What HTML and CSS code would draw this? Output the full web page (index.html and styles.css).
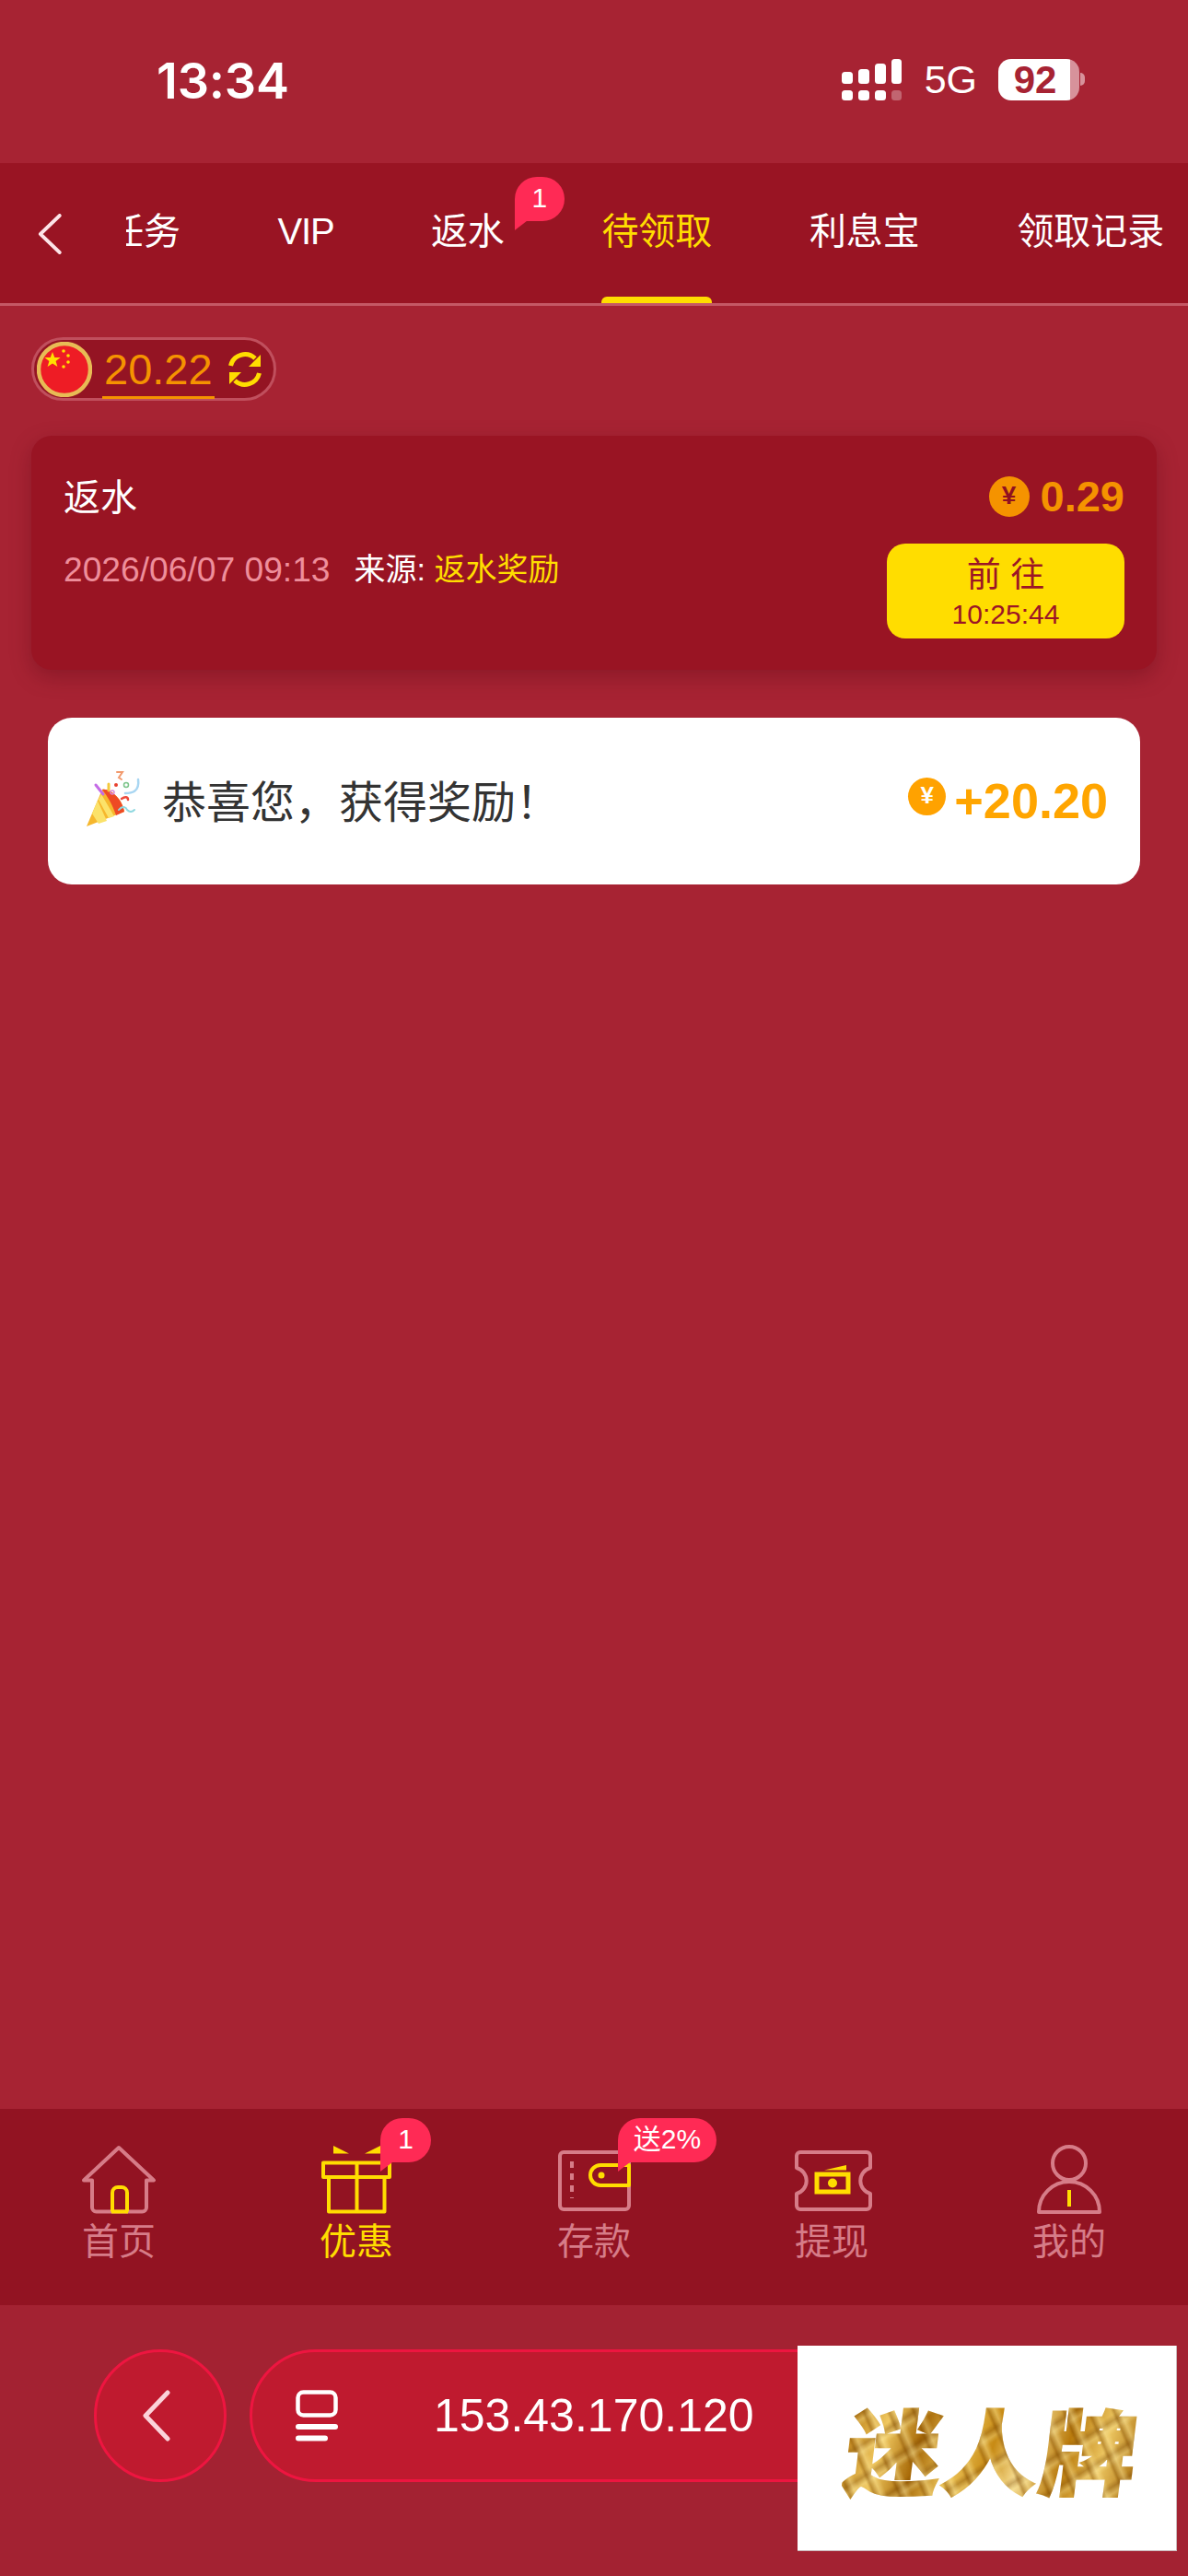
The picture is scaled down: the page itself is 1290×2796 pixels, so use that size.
FILE: index.html
```html
<!DOCTYPE html>
<html lang="zh-CN">
<head>
<meta charset="utf-8">
<title>待领取</title>
<link rel="stylesheet" href="styles.css">
</head>
<body>
<div class="page">
  <header class="status">
    <span class="time">13:34</span>
    <div class="status-right">
      <svg class="signal" width="66" height="46" viewBox="0 0 66 46" fill="#fff">
        <rect x="0" y="14" width="12" height="13" rx="3.5"/><rect x="18" y="11" width="12" height="16" rx="3.5"/><rect x="36" y="5" width="12" height="22" rx="3.5"/><rect x="54" y="0" width="11" height="27" rx="3.5"/>
        <rect x="0" y="34" width="12" height="11" rx="3.5"/><rect x="18" y="34" width="12" height="11" rx="3.5"/><rect x="36" y="34" width="12" height="11" rx="3.5"/><rect x="54" y="34" width="11" height="11" rx="3.5" opacity=".3"/>
      </svg>
      <span class="net">5G</span>
      <div class="battery"><span class="battery-num">92</span></div>
    </div>
  </header>

  <nav class="tabs-bar">
    <div class="tabs-back">
      <svg width="28" height="44" viewBox="0 0 28 44" fill="none" stroke="#fde4e8" stroke-width="4" stroke-linecap="round" stroke-linejoin="round"><path d="M25 2 3 22l22 20" transform="matrix(.95 0 0 1 1 0)"/></svg>
    </div>
    <div class="tabs-scroll">
      <div class="tabs">
        <a class="tab">任务</a>
        <a class="tab tab-vip">VIP</a>
        <a class="tab">返水<span class="badge badge-tab">1</span></a>
        <a class="tab tab-on">待领取</a>
        <a class="tab">利息宝</a>
        <a class="tab">领取记录</a>
      </div>
    </div>
  </nav>

  <main class="main">
    <div class="balance">
      <svg class="flag" width="60" height="60" viewBox="0 0 60 60">
        <circle cx="30" cy="30" r="28" fill="#ee1c25" stroke="#e8bb55" stroke-width="4.5"/>
        <polygon fill="#ffe000" points="17,11 19.3,17 25.6,17 20.6,20.9 22.4,27 17,23.4 11.6,27 13.4,20.9 8.4,17 14.7,17"/>
        <circle cx="29" cy="10" r="1.8" fill="#ffe000"/><circle cx="34" cy="15" r="1.8" fill="#ffe000"/><circle cx="34" cy="22" r="1.8" fill="#ffe000"/><circle cx="29" cy="27" r="1.8" fill="#ffe000"/>
      </svg>
      <span class="balance-num">20.22</span>
      <svg class="refresh" width="38" height="38" viewBox="0 0 38 38" fill="none" stroke="#ffdd00" stroke-width="5">
        <path d="M3.5 15A16 16 0 0 1 30 7"/><path d="M34.500 23A16 16 0 0 1 8 31"/>
        <polygon points="36,3 36,16 23,16" fill="#ffdd00" stroke="none"/><polygon points="2,35 2,22 15,22" fill="#ffdd00" stroke="none"/>
      </svg>
    </div>

    <section class="card">
      <div class="card-left">
        <h2 class="card-title">返水</h2>
        <p class="card-meta"><span class="card-date">2026/06/07 09:13</span><span class="card-src">来源: <em class="card-src-val">返水奖励</em></span></p>
      </div>
      <div class="card-right">
        <div class="amount"><span class="coin coin-card">¥</span><span class="amount-num">0.29</span></div>
        <button class="go"><span class="go-label">前 往</span><span class="go-time">10:25:44</span></button>
      </div>
    </section>

    <div class="toast">
      <div class="toast-left">
        <svg class="popper" width="62" height="66" viewBox="0 0 62 66">
          <path d="M2 62 19 22c8-2 22 10 24 24Z" fill="#f6b72d"/>
          <path d="M8 48 14 34l10 22-9 3ZM18 27l14 24-6 2-11-20Z" fill="#fbe26a"/>
          <path d="M19 22c8-2 22 10 24 24l-9 4C30 38 25 30 19 22Z" fill="#ee4a24"/>
          <g fill="none" stroke-width="2" stroke-linecap="round">
            <path d="M12 17l8 10" stroke="#c46be6" stroke-width="3"/>
            <path d="M26 16v7" stroke="#f4c93c" stroke-width="3"/>
            <path d="M35 3h6l-4 6 3 2" stroke="#f29a6d"/>
            <path d="M58 11c2 14-8 15-14 15" stroke="#a8d6f2" stroke-width="2.500"/>
            <path d="M40 32c4-3 7-2 7 1" stroke="#ec4a3c" stroke-width="2.500"/>
            <path d="M37 44c4-5 8-3 9 0 3 3 6 2 8 0" stroke="#8fd8e0"/>
          </g>
          <circle cx="34" cy="17" r="2" fill="#e8402e"/><circle cx="45" cy="17" r="2.500" fill="none" stroke="#7cc48a" stroke-width="1.500"/><circle cx="30" cy="25" r="2" fill="none" stroke="#dc8ad8" stroke-width="1.500"/>
        </svg>
        <span class="toast-text">恭喜您，获得奖励！</span>
      </div>
      <div class="toast-right"><span class="coin coin-toast">¥</span><span class="toast-num">+20.20</span></div>
    </div>
  </main>

  <footer class="bottom-nav">
    <a class="nav-item">
      <svg class="nav-icon" width="90" height="78" viewBox="0 0 90 78" fill="none" stroke="#d67c88" stroke-width="4" stroke-linejoin="round" stroke-linecap="round">
        <path d="M16 38.500H7L45 3l38 35.500H75V68a4.500 4.500 0 0 1-4.500 4.500h-50A4.500 4.500 0 0 1 16 68Z"/>
        <path d="M38 72.500V52a6 6 0 0 1 6-6h4a6 6 0 0 1 6 6v20.500M37 72.500h18" stroke="#ffdd00" stroke-linecap="butt"/>
      </svg>
      <span class="nav-label">首页</span>
    </a>
    <a class="nav-item nav-on">
      <svg class="nav-icon" width="90" height="78" viewBox="0 0 90 78" fill="none" stroke="#ffdd00" stroke-width="4" stroke-linejoin="round">
        <path d="M9 19.500h72V35H9ZM15 35v37.500h60.500V35M45.500 19.500v53"/>
        <path d="M20 1 37 9.500H20ZM71 1v8.500H54Z" fill="#ffdd00" stroke="none"/>
      </svg>
      <span class="nav-label">优惠</span>
      <span class="badge badge-gift">1</span>
    </a>
    <a class="nav-item">
      <svg class="nav-icon" width="90" height="78" viewBox="0 0 90 78" fill="none" stroke="#d67c88" stroke-width="4" stroke-linejoin="round">
        <rect x="8" y="8" width="75" height="62" rx="4"/>
        <path d="M21 18v40" stroke-dasharray="7 6"/>
        <path d="M83 22H52a11 11 0 0 0 0 22h31Z" stroke="#ffdd00"/>
        <circle cx="53" cy="33" r="3.500" fill="#ffdd00" stroke="none"/>
      </svg>
      <span class="nav-label">存款</span>
      <span class="badge badge-send">送2%</span>
    </a>
    <a class="nav-item">
      <svg class="nav-icon" width="90" height="78" viewBox="0 0 90 78" fill="none" stroke="#d67c88" stroke-width="4" stroke-linejoin="round">
        <path d="M7 25V12a4 4 0 0 1 4-4h72a4 4 0 0 1 4 4v13a14.500 14.500 0 0 0 0 28v13a4 4 0 0 1-4 4H11a4 4 0 0 1-4-4V53a14.500 14.500 0 0 0 0-28Z"/>
        <path d="M29 32h34v19H29Z" stroke="#ffdd00" stroke-width="5" stroke-linejoin="miter"/>
        <circle cx="46" cy="41.500" r="5" fill="#ffdd00" stroke="none"/>
        <path d="M37 27.500 61 22v5.500Z" fill="#ffdd00" stroke="none"/>
      </svg>
      <span class="nav-label">提现</span>
    </a>
    <a class="nav-item">
      <svg class="nav-icon" width="90" height="78" viewBox="0 0 90 78" fill="none" stroke="#d67c88" stroke-width="4" stroke-linejoin="round">
        <circle cx="45" cy="20" r="18"/>
        <path d="M12 73a33 33 0 0 1 66 0Z"/>
        <path d="M45 49v18" stroke="#ffdd00"/>
      </svg>
      <span class="nav-label">我的</span>
    </a>
  </footer>

  <div class="browser-bar">
    <button class="circle-back">
      <svg width="30" height="56" viewBox="0 0 30 56" fill="none" stroke="#fbd3da" stroke-width="5" stroke-linecap="round" stroke-linejoin="round"><path d="M27 3 3 28l24 25"/></svg>
    </button>
    <div class="url-pill">
      <svg class="url-icon" width="46" height="56" viewBox="0 0 46 56" fill="none" stroke="#fff">
        <rect x="2.500" y="2.500" width="41" height="25" rx="6" stroke-width="4.500"/>
        <path d="M3 40h40" stroke-width="6" stroke-linecap="round"/>
        <path d="M3 52.500h29" stroke-width="6" stroke-linecap="round"/>
      </svg>
      <span class="url-text">153.43.170.120</span>
    </div>
    <div class="logo-box"><span class="logo-text">迷人牌</span></div>
  </div>
</div>
</body>
</html>
```

FILE: styles.css
```css
* { box-sizing: border-box; }
html, body { margin: 0; padding: 0; }
body {
  font-family: "Liberation Sans", "Noto Sans CJK SC", sans-serif;
  background: #a72333;
}
.page {
  position: relative;
  width: 1290px;
  height: 2796px;
  overflow: hidden;
  display: flex;
  flex-direction: column;
}

/* status bar */
.status {
  height: 177px;
  flex: none;
  display: flex;
  justify-content: space-between;
  padding: 0 118px 0 170px;
  color: #fff;
}
.time {
  font-family: Inter, sans-serif;
  font-weight: 600;
  font-size: 54px;
  line-height: 62px;
  margin-top: 57px;
  letter-spacing: -.2px;
}
.status-right {
  display: flex;
  align-items: flex-start;
  padding-top: 64px;
}
.signal { margin-right: 24px; }
.net {
  font-size: 43px;
  line-height: 48px;
  margin-right: 23px;
  margin-top: -2px;
}
.battery {
  position: relative;
  width: 88px;
  height: 45px;
  border-radius: 14px;
  background: linear-gradient(90deg, #fff 89%, #d7929b 89%);
  color: #a72333;
  font-weight: 700;
  font-size: 42px;
  line-height: 45px;
  text-align: center;
  padding-right: 8px;
}
.battery::after {
  content: "";
  position: absolute;
  left: 89px;
  top: 15px;
  width: 5px;
  height: 14px;
  border-radius: 0 7px 7px 0;
  background: #d7929b;
}

/* tabs */
.tabs-bar {
  height: 155px;
  flex: none;
  display: flex;
  background: #991423;
  border-bottom: 3px solid #c55865;
}
.tabs-back {
  width: 137px;
  flex: none;
  padding: 55px 0 0 40px;
}
.tabs-scroll {
  flex: 1;
  min-width: 0;
  overflow: hidden;
}
.tabs {
  display: flex;
  gap: 105.500px;
  margin-left: -21px;
  height: 100%;
}
.tab {
  position: relative;
  flex: none;
  height: 100%;
  color: #fff;
  font-size: 40px;
  line-height: 48px;
  padding-top: 50px;
  white-space: nowrap;
}
.tab-vip { letter-spacing: -1.2px; }
.tab-on { color: #ffdd00; }
.tab-on::after {
  content: "";
  position: absolute;
  left: 0;
  right: 0;
  bottom: 0;
  height: 7px;
  border-radius: 6px 6px 0 0;
  background: #ffdd00;
}
.badge {
  position: absolute;
  height: 48px;
  background: #ff2a55;
  color: #fff;
  font-size: 30px;
  line-height: 46px;
  text-align: center;
  border-radius: 24px 24px 24px 0;
  white-space: nowrap;
}
.badge::after {
  content: "";
  position: absolute;
  left: 0;
  top: 48px;
  width: 13px;
  height: 10px;
  background: #ff2a55;
  clip-path: polygon(0 0, 100% 0, 0 100%);
}
.badge-tab { left: 91px; top: 15px; width: 54px; }
.badge-gift { left: 155px; top: -29px; width: 55px; }
.badge-send { left: 155px; top: -29px; width: 107px; }

/* main */
.main {
  position: relative;
  flex: 1;
  min-height: 0;
  padding: 34px 34px 0;
}
.balance {
  display: inline-flex;
  align-items: center;
  width: 266px;
  height: 69px;
  padding-left: 3px;
  border: 3px solid #c04f5d;
  border-radius: 35px;
  background: #941423;
}
.flag { flex: none; margin-top: 1px; }
.balance-num {
  margin-left: 11px;
  color: #f59300;
  font-size: 47px;
  line-height: 58px;
  padding: 0 2px;
  border-bottom: 3px solid #f59300;
  margin-top: 3px;
}
.refresh { margin-left: 14px; flex: none; }
.card {
  margin-top: 38px;
  height: 254px;
  padding: 43px 35px 0;
  display: flex;
  justify-content: space-between;
  border-radius: 22px;
  background: #991423;
  box-shadow: 0 8px 22px rgba(90, 10, 20, .35);
}
.card-title {
  margin: 0;
  font-weight: 400;
  font-size: 40px;
  line-height: 48px;
  color: #fff;
}
.card-meta {
  margin: 32px 0 0;
  font-size: 34px;
  line-height: 44px;
  color: #fff;
  display: flex;
  gap: 26px;
}
.card-date { color: #ee8e9b; font-size: 37.200px; }
.card-src-val { font-style: normal; color: #ffdd00; }
.card-right {
  display: flex;
  flex-direction: column;
  align-items: flex-end;
}
.amount {
  display: flex;
  align-items: center;
  height: 44px;
  gap: 12px;
  margin-top: 1px;
}
.coin {
  display: block;
  flex: none;
  border-radius: 50%;
  text-align: center;
  font-weight: 700;
}
.coin-card {
  width: 44px;
  height: 44px;
  line-height: 42px;
  font-size: 28px;
  background: #f59300;
  color: #8f1020;
}
.amount-num {
  font-size: 47px;
  font-weight: 700;
  color: #f59300;
  line-height: 44px;
}
.go {
  margin-top: 29px;
  width: 258px;
  height: 103px;
  border: 0;
  padding: 14px 0 0;
  border-radius: 20px;
  background: #ffdd00;
  color: #9c1526;
  font-family: inherit;
  display: flex;
  flex-direction: column;
  align-items: center;
}
.go-label { font-size: 37px; line-height: 42px; }
.go-time { font-size: 30px; line-height: 34px; margin-top: 4px; }

.toast {
  position: absolute;
  left: 52px;
  right: 52px;
  top: 447px;
  height: 181px;
  padding: 0 35px 0 40px;
  display: flex;
  align-items: center;
  justify-content: space-between;
  border-radius: 26px;
  background: #fff;
}
.toast-left { display: flex; align-items: center; }
.popper { flex: none; margin-right: 22px; margin-top: -4px; }
.toast-text { font-size: 48px; line-height: 60px; color: #333; margin-top: 5px; }
.toast-right { display: flex; align-items: center; gap: 9px; margin-top: -2px; }
.coin-toast {
  width: 41px;
  height: 41px;
  line-height: 39px;
  font-size: 26px;
  background: #ffa200;
  color: #fff;
  margin-top: -8px;
}
.toast-num { font-size: 54px; line-height: 60px; font-weight: 700; color: #ffa500; }

/* bottom nav */
.bottom-nav {
  flex: none;
  height: 213px;
  display: grid;
  grid-template-columns: repeat(5, 1fr);
  padding-top: 39px;
  background: #921322;
}
.nav-item {
  position: relative;
  display: flex;
  flex-direction: column;
  align-items: center;
  height: 130px;
}
.nav-icon { flex: none; }
.nav-label {
  margin-top: 3px;
  font-size: 40px;
  line-height: 48px;
  color: #d67c88;
}
.nav-on .nav-label { color: #ffdd00; }

/* browser bar */
.browser-bar {
  flex: none;
  height: 294px;
  display: flex;
  align-items: flex-start;
  gap: 25px;
  padding: 48px 0 0 102px;
  background: #a32232;
}
.circle-back {
  flex: none;
  width: 144px;
  height: 144px;
  padding: 0 9px 0 0;
  border: 3px solid #ee1540;
  border-radius: 50%;
  background: #bf1a2f;
  display: flex;
  align-items: center;
  justify-content: center;
}
.url-pill {
  flex: none;
  width: 750px;
  height: 144px;
  padding-left: 47px;
  display: flex;
  align-items: center;
  gap: 104px;
  border: 3px solid #ee1540;
  border-radius: 72px;
  background: #bf1a2f;
}
.url-icon { flex: none; }
.url-text { color: #fff; font-size: 50px; line-height: 60px; white-space: nowrap; }
.logo-box {
  position: absolute;
  left: 866px;
  top: 2546px;
  width: 412px;
  height: 223px;
  background: #fff;
  border-right: 1px solid #c9b9bb;
  border-bottom: 1px solid #c9b9bb;
  display: flex;
  align-items: center;
  justify-content: center;
}
.logo-text {
  display: block;
  margin-left: 14px;
  font-family: "Noto Sans CJK SC", sans-serif;
  font-weight: 900;
  font-size: 104px;
  line-height: 120px;
  letter-spacing: 2px;
  transform: skewX(-7deg) scaleY(.96);
  color: transparent;
  -webkit-text-stroke: 2.500px transparent;
  background:
    repeating-linear-gradient(62deg, rgba(120, 70, 0, 0) 0 9px, rgba(130, 75, 0, .42) 12px, rgba(255, 235, 160, .4) 18px, rgba(120, 70, 0, 0) 24px),
    repeating-linear-gradient(-35deg, rgba(255, 240, 170, 0) 0 14px, rgba(255, 240, 170, .3) 20px, rgba(110, 60, 0, .3) 27px, rgba(110, 60, 0, 0) 33px),
    linear-gradient(100deg, #b87a10, #f0c860 14%, #a86a08 26%, #eec65c 38%, #c78a14 50%, #f6dc90 60%, #b97a0c 74%, #ecc560 86%, #a66a0a);
  -webkit-background-clip: text;
  background-clip: text;
}
```
